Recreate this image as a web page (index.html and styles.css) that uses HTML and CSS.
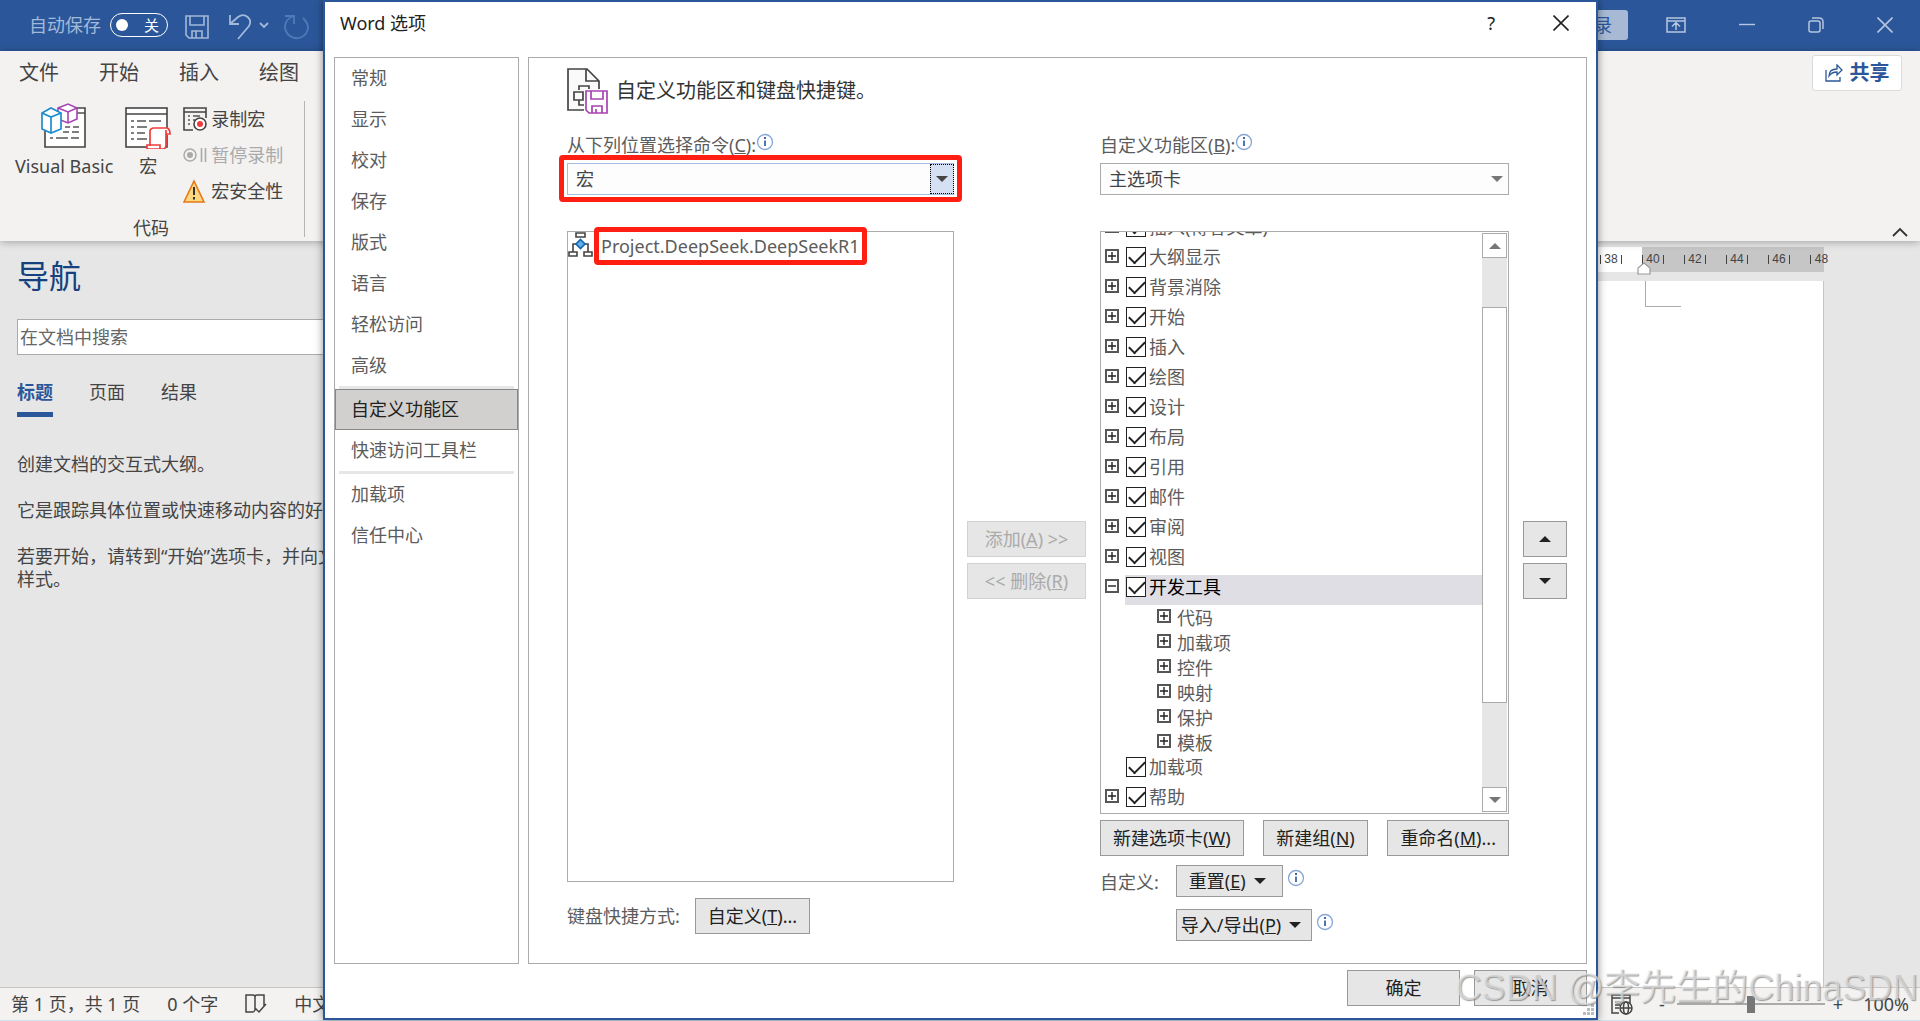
FILE: index.html
```html
<!DOCTYPE html>
<html lang="zh-CN">
<head>
    <meta charset="UTF-8">
    <meta name="viewport" content="width=device-width, initial-scale=1.0">
    <title>Word 选项</title>
    <link rel="stylesheet" href="styles.css">
</head>
<body>
    <svg class="symbols" aria-hidden="true">
        <symbol id="plus" viewBox="0 0 14 14">
            <rect x="1" y="1" width="12" height="12" fill="#fff" stroke="#555" stroke-width="2"/>
            <path d="M3 7h8M7 3v8" stroke="#222" stroke-width="1.4"/>
        </symbol>
        <symbol id="minus" viewBox="0 0 14 14">
            <rect x="1" y="1" width="12" height="12" fill="#fff" stroke="#555" stroke-width="2"/>
            <path d="M3 7h8" stroke="#222" stroke-width="1.4"/>
        </symbol>
        <symbol id="info" viewBox="0 0 18 18">
            <circle cx="9" cy="9" r="7.5" fill="#fff" stroke="#86a6d4" stroke-width="1.3"/>
            <path d="M9 7.500V13" fill="none" stroke="#3f66a3" stroke-width="1.8"/>
            <rect x="8" y="4" width="2" height="2" fill="#3f66a3"/>
        </symbol>
        <symbol id="up" viewBox="0 0 12 6"><path d="M0 6l6-6 6 6z" fill="currentColor"/></symbol>
        <symbol id="down" viewBox="0 0 12 6"><path d="M0 0l6 6 6-6z" fill="currentColor"/></symbol>
        <symbol id="close" viewBox="0 0 16 16"><path d="M.5.5l15 15M15.500.5l-15 15" stroke="currentColor" stroke-width="1.6"/></symbol>
    </svg>

    <div class="app">
        <!-- title bar -->
        <header class="titlebar">
            <div class="quick">
                <span class="autosave">自动保存</span>
                <button class="toggle"><i></i>关</button>
                <button class="tool" aria-label="保存">
                    <svg width="24" height="24" viewBox="0 0 24 24" fill="none" stroke="#a3b9d9" stroke-width="1.6"><path d="M1 1h22v22H4l-3-3zM5 1v9h14V1M7 23v-7h10v7M11 16v7"/></svg>
                </button>
                <button class="tool" aria-label="撤消">
                    <svg width="40" height="26" viewBox="0 0 40 26" fill="none" stroke="#a3b9d9" stroke-width="1.8"><path d="M1 1v9h9M1 10l8-7c7-5 15 2 11 9L9 25"/><path d="M31 9l4 4 4-4"/></svg>
                </button>
                <button class="tool" aria-label="恢复">
                    <svg width="25" height="26" viewBox="0 0 25 26" fill="none" stroke="#5079b7" stroke-width="1.8"><path d="M1 2h9v8M10 2c-10 3-12 14-4 20 7 5 17 1 18-8 0-4-2-7-5-10"/></svg>
                </button>
            </div>
            <div class="window-buttons">
                <button class="login">登录</button>
                <button class="tool" aria-label="功能区显示选项">
                    <svg width="20" height="16" viewBox="0 0 20 16" fill="none" stroke="#b4c6e0" stroke-width="1.5"><path d="M1 1h18v14H1zM1 4h18M10 13V6M6 9.500l4-4 4 4"/></svg>
                </button>
                <button class="tool" aria-label="最小化">
                    <svg width="16" height="16" viewBox="0 0 16 16" stroke="#b4c6e0" stroke-width="1.4"><path d="M0 7.500h16"/></svg>
                </button>
                <button class="tool" aria-label="还原">
                    <svg width="16" height="16" viewBox="0 0 16 16" fill="none" stroke="#b4c6e0" stroke-width="1.5"><rect x="1" y="4" width="11" height="11" rx="2"/><path d="M4 1h7q4 0 4 4v7"/></svg>
                </button>
                <button class="tool" aria-label="关闭"><svg width="16" height="16"><use href="#close"/></svg></button>
            </div>
        </header>

        <!-- ribbon -->
        <section class="ribbon">
            <nav class="tabs">
                <button>文件</button>
                <button>开始</button>
                <button>插入</button>
                <button>绘图</button>
            </nav>
            <div class="group">
                <div class="group-items">
                    <button class="big">
                        <svg width="46" height="46" viewBox="0 0 46 46" fill="none">
                            <path d="M4 28v16h40V5H20" fill="#fff" stroke="#444" stroke-width="1.6"/>
                            <path d="M36 10h8" stroke="#444" stroke-width="1.4"/>
                            <path d="M24 24h5M32 24h6M22 29h6M31 29h7M9 35h3M15 35h12M30 35h8" stroke="#555" stroke-width="1.4"/>
                            <path d="M17 5l10-4 9 4v11l-9 4-10-4z" fill="#fff" stroke="#a743b2" stroke-width="1.6"/>
                            <path d="M17 5l10 4 9-4M27 9v11" stroke="#a743b2" stroke-width="1.6"/>
                            <path d="M1 10l9-5 10 5v16l-10 4-9-4z" fill="#fff" stroke="#1e8bcd" stroke-width="1.7"/>
                            <path d="M1 10l9 4 10-4M10 14v16" stroke="#1e8bcd" stroke-width="1.7"/>
                        </svg>
                        <span>Visual Basic</span>
                    </button>
                    <button class="big">
                        <svg width="46" height="46" viewBox="0 0 46 46" fill="none">
                            <rect x="1" y="5" width="41" height="39" fill="#fff" stroke="#444" stroke-width="1.6"/>
                            <path d="M1 11h41" stroke="#444" stroke-width="1.4"/>
                            <path d="M6 18h3M12 18h9M24 18h12M6 24h3M12 24h10M6 30h3M12 30h8M6 36h3M12 36h10" stroke="#555" stroke-width="1.4"/>
                            <path d="M27 25h15q3 0 3 3v4h-4v12q0 4-4 4H22v-5h3V28q0-3 3-3z" fill="#fff"/>
                            <path d="M25 43V28q0-2 3-3h14q3 1 3 6h-4v11q0 4-3 4H22v-4h13v4M41 31v-4" stroke="#f03c3c" stroke-width="1.7"/>
                        </svg>
                        <span>宏</span>
                    </button>
                    <div class="small-items">
                        <button class="small">
                            <svg width="24" height="24" viewBox="0 0 24 24" fill="none"><path d="M10 23H1V1h22v10M1 5h22" stroke="#444" stroke-width="1.6"/><path d="M5 9h2M10 9h7M5 13h2M5 17h2M10 13h2" stroke="#555" stroke-width="1.4"/><circle cx="17" cy="17" r="6" fill="#fff" stroke="#444" stroke-width="1.6"/><circle cx="17" cy="17" r="3" fill="#f23b3b"/></svg>
                            录制宏
                        </button>
                        <button class="small" disabled>
                            <svg width="24" height="24" viewBox="0 0 24 24" fill="none"><circle cx="7" cy="12" r="6" stroke="#aaa" stroke-width="1.5"/><circle cx="7" cy="12" r="3" fill="#aaa"/><path d="M18.500 5v14M22.500 5v14" stroke="#aaa" stroke-width="1.6"/></svg>
                            暂停录制
                        </button>
                        <button class="small">
                            <svg width="24" height="24" viewBox="0 0 24 24"><path d="M11 2l10 21H1z" fill="#fbd87f" stroke="#e67817" stroke-width="1.6"/><path d="M11 8v8M11 18v2.500" stroke="#333" stroke-width="2"/></svg>
                            宏安全性
                        </button>
                    </div>
                </div>
                <div class="group-name">代码</div>
            </div>
            <div class="ribbon-side">
                <button class="share">
                    <svg width="18" height="18" viewBox="0 0 18 18" fill="none" stroke="#2b579a" stroke-width="1.3"><path d="M1 6v11h14v-4M4 12c0-5 3-7 8-7V1l5 5-5 5V8c-4 0-6 1-8 4z"/></svg>
                    共享
                </button>
                <button class="tool" aria-label="折叠功能区">
                    <svg width="16" height="10" viewBox="0 0 16 10" fill="none" stroke="#333" stroke-width="1.8"><path d="M1 9l7-7 7 7"/></svg>
                </button>
            </div>
        </section>

        <main class="workspace">
            <aside class="nav-pane">
                <h2>导航</h2>
                <input class="search" type="text" placeholder="在文档中搜索" aria-label="在文档中搜索">
                <div class="nav-tabs">
                    <button class="active">标题</button>
                    <button>页面</button>
                    <button>结果</button>
                </div>
                <p>创建文档的交互式大纲。</p>
                <p>它是跟踪具体位置或快速移动内容的好方法。</p>
                <p>若要开始，请转到“开始”选项卡，并向文档<br>样式。</p>
            </aside>
            <div class="document">
                <div class="ruler">
                    <div class="ruler-text"><span>38</span></div>
                    <div class="ruler-margin">
                        <span>40</span><span>42</span><span>44</span><span>46</span><span class="last">48</span>
                        <svg class="indent" width="14" height="13" viewBox="0 0 14 13"><path d="M1 12V6l6-5 6 5v6z" fill="#fff" stroke="#999" stroke-width="1.2"/></svg>
                    </div>
                </div>
                <div class="page"><div class="crop-mark"></div></div>
            </div>
        </main>

        <footer class="status">
            <div class="status-left">
                <span>第 1 页，共 1 页</span>
                <span>0 个字</span>
                <svg width="22" height="20" viewBox="0 0 22 20" fill="none" stroke="#444" stroke-width="1.5"><path d="M10 2v14q-1 2-2 2H1V1h7q2 0 2 2 0-2 2-2h7v11M10 14l4 4 7-8M19 1v8"/></svg>
                <span>中文(中国)</span>
            </div>
            <div class="status-right">
                <svg width="22" height="21" viewBox="0 0 22 21" fill="none" stroke="#444" stroke-width="1.5"><path d="M8 19H1V1h18v8M1 4h18M4 8h8M4 11h5M4 14h4"/><circle cx="15" cy="14" r="6" fill="#f3f2f1"/><ellipse cx="15" cy="14" rx="2.500" ry="6"/><path d="M9 14h12"/></svg>
                <span>-</span>
                <input class="zoom" type="range" min="0" max="100" value="50" aria-label="缩放">
                <span>+</span>
                <span class="percent">100%</span>
            </div>
        </footer>
    </div>

    <!-- options dialog -->
    <div class="dialog" role="dialog" aria-label="Word 选项">
        <div class="dialog-title">
            <h1>Word 选项</h1>
            <button class="tool help">?</button>
            <button class="tool" aria-label="关闭"><svg width="16" height="16"><use href="#close"/></svg></button>
        </div>
        <div class="dialog-body">
            <nav class="categories">
                <button>常规</button>
                <button>显示</button>
                <button>校对</button>
                <button>保存</button>
                <button>版式</button>
                <button>语言</button>
                <button>轻松访问</button>
                <button>高级</button>
                <hr>
                <button class="selected">自定义功能区</button>
                <button>快速访问工具栏</button>
                <hr>
                <button>加载项</button>
                <button>信任中心</button>
            </nav>
            <section class="panel">
                <div class="panel-heading">
                    <svg width="42" height="46" viewBox="0 0 42 46" fill="none">
                        <path d="M1 1h19l12 12v29H1z" fill="#fafafa"/>
                        <path d="M17 42H1V1h19l12 12v10M19 1v12h13" stroke="#444" stroke-width="1.7"/>
                        <path d="M12 22v-4h10v5M7 24h9v8H7zM12 32v5h6" stroke="#444" stroke-width="1.7"/>
                        <path d="M17 21h25v25H17z" fill="#fff"/>
                        <path d="M19 23h21v22H22l-3-3zM24 23v8h12v-8M25 45v-7h10v7M29 41v4" stroke="#a743b2" stroke-width="1.7"/>
                    </svg>
                    <h2>自定义功能区和键盘快捷键。</h2>
                </div>
                <div class="columns">
                    <div class="commands">
                        <div class="field-label">
                            <label for="source">从下列位置选择命令(<u>C</u>):</label>
                            <svg class="info" width="18" height="18"><use href="#info"/></svg>
                        </div>
                        <div class="combo focused">
                            <select id="source"><option>宏</option></select>
                            <span class="combo-arrow"><svg width="12" height="6"><use href="#down"/></svg></span>
                            <span class="mark"></span>
                        </div>
                        <ul class="command-list" role="listbox" aria-label="命令">
                            <li role="option">
                                <svg width="25" height="25" viewBox="0 0 25 25" fill="none" stroke="#444" stroke-width="1.6"><path d="M8 1h9v4H8zM1 20h8v4H1zM16 20h8v4h-8zM5 20v-8h4M16 12h4v8"/><path d="M12.500 7.500l4.500 4.500-4.500 4.500L8 12z" fill="#5fb0ea" stroke="#1565ad"/></svg>
                                <span class="command">Project.DeepSeek.DeepSeekR1<span class="mark"></span></span>
                            </li>
                        </ul>
                        <div class="keyboard">
                            <span>键盘快捷方式:</span>
                            <button class="btn">自定义(<u>T</u>)...</button>
                        </div>
                    </div>

                    <div class="transfer">
                        <button class="btn" disabled>添加(<u>A</u>) &gt;&gt;</button>
                        <button class="btn" disabled>&lt;&lt; 删除(<u>R</u>)</button>
                    </div>

                    <div class="ribbon-tabs">
                        <div class="field-label">
                            <label for="target">自定义功能区(<u>B</u>):</label>
                            <svg class="info" width="18" height="18"><use href="#info"/></svg>
                        </div>
                        <div class="combo">
                            <select id="target"><option>主选项卡</option></select>
                            <span class="combo-arrow"><svg width="12" height="6"><use href="#down"/></svg></span>
                        </div>
                        <div class="tree">
                            <ul>
                                <li><svg><use href="#plus"/></svg><label><input type="checkbox" checked>插入(博客文章)</label></li>
                                <li><svg><use href="#plus"/></svg><label><input type="checkbox" checked>大纲显示</label></li>
                                <li><svg><use href="#plus"/></svg><label><input type="checkbox" checked>背景消除</label></li>
                                <li><svg><use href="#plus"/></svg><label><input type="checkbox" checked>开始</label></li>
                                <li><svg><use href="#plus"/></svg><label><input type="checkbox" checked>插入</label></li>
                                <li><svg><use href="#plus"/></svg><label><input type="checkbox" checked>绘图</label></li>
                                <li><svg><use href="#plus"/></svg><label><input type="checkbox" checked>设计</label></li>
                                <li><svg><use href="#plus"/></svg><label><input type="checkbox" checked>布局</label></li>
                                <li><svg><use href="#plus"/></svg><label><input type="checkbox" checked>引用</label></li>
                                <li><svg><use href="#plus"/></svg><label><input type="checkbox" checked>邮件</label></li>
                                <li><svg><use href="#plus"/></svg><label><input type="checkbox" checked>审阅</label></li>
                                <li><svg><use href="#plus"/></svg><label><input type="checkbox" checked>视图</label></li>
                                <li class="current"><svg><use href="#minus"/></svg><label><input type="checkbox" checked>开发工具</label></li>
                                <li class="child"><svg><use href="#plus"/></svg>代码</li>
                                <li class="child"><svg><use href="#plus"/></svg>加载项</li>
                                <li class="child"><svg><use href="#plus"/></svg>控件</li>
                                <li class="child"><svg><use href="#plus"/></svg>映射</li>
                                <li class="child"><svg><use href="#plus"/></svg>保护</li>
                                <li class="child"><svg><use href="#plus"/></svg>模板</li>
                                <li><svg></svg><label><input type="checkbox" checked>加载项</label></li>
                                <li><svg><use href="#plus"/></svg><label><input type="checkbox" checked>帮助</label></li>
                            </ul>
                            <div class="scrollbar">
                                <button aria-label="向上滚动"><svg width="12" height="6"><use href="#up"/></svg></button>
                                <div class="track"><div class="thumb"></div></div>
                                <button aria-label="向下滚动"><svg width="12" height="6"><use href="#down"/></svg></button>
                            </div>
                        </div>
                        <div class="tab-actions">
                            <button class="btn">新建选项卡(<u>W</u>)</button>
                            <button class="btn">新建组(<u>N</u>)</button>
                            <button class="btn">重命名(<u>M</u>)...</button>
                        </div>
                        <div class="customize">
                            <span>自定义:</span>
                            <div class="customize-buttons">
                                <div>
                                    <button class="btn menu"><span>重置(<u>E</u>)</span><svg width="12" height="6"><use href="#down"/></svg></button>
                                    <svg class="info" width="18" height="18"><use href="#info"/></svg>
                                </div>
                                <div>
                                    <button class="btn menu tight"><span>导入/导出(<u>P</u>)</span><svg width="12" height="6"><use href="#down"/></svg></button>
                                    <svg class="info" width="18" height="18"><use href="#info"/></svg>
                                </div>
                            </div>
                        </div>
                    </div>

                    <div class="order">
                        <button class="btn" aria-label="上移"><svg width="12" height="6"><use href="#up"/></svg></button>
                        <button class="btn" aria-label="下移"><svg width="12" height="6"><use href="#down"/></svg></button>
                    </div>
                </div>
            </section>
        </div>
        <div class="dialog-footer">
            <button class="btn">确定</button>
            <button class="btn">取消</button>
            <svg class="grip" width="12" height="12" viewBox="0 0 12 12" fill="#bbb"><path d="M8 0h3v3H8zM8 4h3v3H8zM8 8h3v3H8zM4 4h3v3H4zM4 8h3v3H4zM0 8h3v3H0z"/></svg>
        </div>
    </div>

    <div class="watermark">CSDN @李先生的ChinaSDN</div>
</body>
</html>
```
FILE: styles.css
```css
* {
    box-sizing: border-box;
}
body {
    margin: 0;
    height: 100vh;
    overflow: hidden;
    position: relative;
    font-family: "Noto Sans", "Noto Sans CJK SC", sans-serif;
    font-size: 18px;
    line-height: 24px;
    color: #444;
    background: #cfe3ee;
}
button, input, select {
    font: inherit;
    color: inherit;
}
button {
    padding: 0;
    border: none;
    background: none;
    white-space: nowrap;
}
h1, h2, p, ul {
    margin: 0;
    padding: 0;
    font-weight: inherit;
}
ul {
    list-style: none;
}
svg {
    display: block;
    flex: none;
}
.symbols {
    position: absolute;
    width: 0;
    height: 0;
}

/* application window */
.app {
    display: flex;
    flex-direction: column;
    height: calc(100vh - 1px);
}
.titlebar {
    display: flex;
    justify-content: space-between;
    height: 51px;
    background: #2b579a;
    color: #a3b9d9;
}
.quick {
    display: flex;
    align-items: center;
    height: 49px;
    padding-left: 29px;
}
.toggle {
    display: flex;
    align-items: center;
    justify-content: space-between;
    width: 58px;
    height: 24px;
    margin: 0 17px 0 9px;
    padding: 0 8px 0 5px;
    border: 1px solid #fff;
    border-radius: 12px;
    color: #fff;
    font-size: 15px;
}
.toggle i {
    width: 12px;
    height: 12px;
    border-radius: 50%;
    background: #fff;
}
.quick .tool {
    margin: 4px 20px 0 0;
}
.quick .tool + .tool + .tool {
    margin-left: -5px;
}
.window-buttons {
    display: flex;
    align-items: center;
    gap: 53px;
    height: 49px;
    padding-right: 27px;
    color: #b4c6e0;
}
.login {
    width: 76px;
    height: 30px;
    padding-right: 16px;
    margin-right: -15px;
    border-radius: 3px;
    background: #a7b9d4;
    color: #2b579a;
    text-align: right;
}
.ribbon {
    position: relative;
    z-index: 1;
    display: grid;
    grid-template-columns: 1fr auto;
    grid-template-rows: 44px 1fr;
    height: 190px;
    background: #f3f2f1;
    box-shadow: 0 1px 8px rgba(0, 0, 0, .3);
}
.tabs {
    display: flex;
    gap: 40px;
    padding-left: 19px;
    font-size: 20px;
}
.group {
    grid-row: 2;
    grid-column: 1;
    justify-self: start;
    width: 305px;
    height: 136px;
    margin-top: 6px;
    padding-left: 15px;
    border-right: 1px solid #b5b5b5;
}
.group-items {
    display: flex;
    height: 111px;
}
.big {
    display: flex;
    flex-direction: column;
    align-items: center;
    gap: 5px;
    height: 80px;
    margin: 2px 12px 0 0;
}
.small-items {
    display: flex;
    flex-direction: column;
    gap: 12px;
    padding-top: 6px;
}
.small {
    display: flex;
    align-items: center;
    gap: 4px;
}
.small:disabled {
    color: #aaa;
}
.group-name {
    padding-left: 118px;
    line-height: 32px;
}
.ribbon-side {
    grid-row: 1 / 3;
    grid-column: 2;
    display: flex;
    flex-direction: column;
    justify-content: space-between;
    align-items: flex-end;
    padding: 4px 18px 4px 0;
}
.ribbon-side .tool {
    margin-right: -6px;
}
.share {
    display: flex;
    align-items: center;
    justify-content: center;
    gap: 7px;
    width: 90px;
    height: 36px;
    border: 1px solid #dcdbda;
    border-radius: 3px;
    background: #fff;
    color: #2b579a;
    font-size: 20px;
    font-weight: 700;
}
.workspace {
    flex: 1;
    display: flex;
    min-height: 0;
    background: #e6e6e6;
}
.nav-pane {
    width: 370px;
    padding: 15px 0 0 17px;
    white-space: nowrap;
}
.nav-pane h2 {
    height: 63px;
    font-size: 32px;
    line-height: 40px;
    color: #15417e;
}
.search {
    display: block;
    width: 100%;
    height: 36px;
    padding: 0 2px;
    border: 1px solid #ababab;
    background: #fff;
}
.search::placeholder {
    color: #666;
    opacity: 1;
}
.nav-tabs {
    display: flex;
    gap: 36px;
    margin: 24px 0 36px;
}
.nav-tabs button {
    height: 38px;
    padding-bottom: 8px;
    border-bottom: 5px solid transparent;
}
.nav-tabs .active {
    border-color: #2b579a;
    color: #2b579a;
    font-weight: 700;
}
.nav-pane p {
    margin-bottom: 23px;
    line-height: 23px;
}
.document {
    flex: 1;
    display: flex;
    flex-direction: column;
    margin-right: 96px;
    padding-top: 6px;
}
.ruler {
    display: flex;
    height: 25px;
    margin-bottom: 9px;
    font: 400 12px/9px "Liberation Sans", Arial, sans-serif;
}
.ruler-text {
    flex: 1;
    display: flex;
    justify-content: flex-end;
    align-items: center;
    background: #fff;
}
.ruler-margin {
    position: relative;
    display: flex;
    align-items: center;
    width: 182px;
    background: #c6c6c6;
}
.ruler span {
    flex: none;
    width: 22px;
    margin-right: 20px;
    border: solid #444;
    border-width: 0 1px;
    text-align: center;
}
.ruler .last {
    border-right: none;
    margin-right: -20px;
}
.indent {
    position: absolute;
    left: -5px;
    bottom: -3px;
}
.page {
    flex: 1;
    background: #fff;
    border-right: 1px solid #c6c6c6;
}
.crop-mark {
    width: 36px;
    height: 26px;
    margin-left: auto;
    margin-right: 142px;
    border: solid #ababab;
    border-width: 0 0 1px 1px;
}
.status {
    display: flex;
    justify-content: space-between;
    height: 33px;
    border-top: 1px solid #c6c6c6;
    background: #f3f2f1;
}
.status-left, .status-right {
    display: flex;
    align-items: center;
}
.status-left {
    gap: 27px;
    padding-left: 11px;
}
.status-right {
    gap: 8px;
    padding-right: 11px;
}
.status-right svg {
    margin-right: 18px;
}
.zoom {
    appearance: none;
    width: 148px;
    height: 18px;
    margin: 0 0 0 4px;
    background: linear-gradient(#aaa, #aaa) center / 100% 2px no-repeat;
}
.zoom::-webkit-slider-thumb {
    appearance: none;
    width: 8px;
    height: 17px;
    background: #777;
}
.percent {
    margin-left: 12px;
}

/* options dialog */
.dialog {
    position: absolute;
    top: 0;
    right: 322px;
    bottom: 1px;
    left: 323px;
    z-index: 2;
    display: flex;
    flex-direction: column;
    border: 2px solid #2b579a;
    background: #fff;
    box-shadow: 0 0 8px rgba(0, 0, 0, .45);
    color: #5c5c5c;
}
.dialog-title {
    display: flex;
    align-items: center;
    height: 55px;
    padding: 0 27px 14px 15px;
    color: #222;
}
.dialog-title h1 {
    flex: 1;
    font-size: 18px;
}
.dialog-title .help {
    margin-right: 58px;
}
.dialog-body {
    flex: 1;
    display: flex;
    gap: 9px;
    min-height: 0;
    padding: 0 9px;
}
.categories {
    display: flex;
    flex-direction: column;
    width: 185px;
    border: 1px solid #ababab;
}
.categories button {
    height: 41px;
    padding: 0 0 1px 16px;
    text-align: left;
}
.categories .selected {
    padding-left: 15px;
    border: 1px solid #888;
    background: #d2d0ce;
    color: #222;
}
.categories hr {
    width: calc(100% - 8px);
    height: 3px;
    margin: 0 auto;
    border: none;
    background: #e6e6e6;
}
.panel {
    flex: 1;
    display: flex;
    flex-direction: column;
    padding: 10px 19px 22px 38px;
    border: 1px solid #ababab;
}
.panel-heading {
    display: flex;
    align-items: center;
    gap: 7px;
    height: 65px;
    padding-bottom: 19px;
}
.panel-heading h2 {
    font-size: 20px;
    color: #333;
}
.columns {
    flex: 1;
    display: flex;
    min-height: 0;
}
.commands, .ribbon-tabs {
    display: flex;
    flex-direction: column;
    min-width: 0;
}
.commands {
    flex: 387 1 0;
    padding-bottom: 7px;
}
.ribbon-tabs {
    flex: 409 1 0;
}
.field-label {
    display: flex;
    height: 30px;
}
.combo {
    position: relative;
    height: 32px;
    margin-bottom: 36px;
}
.combo select {
    appearance: none;
    width: 100%;
    height: 32px;
    padding: 0 30px 0 8px;
    border: 1px solid #ababab;
    border-radius: 0;
    background: #fdfdfd;
    color: #444;
}
.combo-arrow {
    position: absolute;
    top: 1px;
    right: 0;
    bottom: 1px;
    width: 24px;
    display: flex;
    align-items: center;
    justify-content: center;
    color: #777;
    pointer-events: none;
}
.focused select {
    border-color: #a3bde3;
}
.focused .combo-arrow {
    border: 1px dotted #000;
    background: #d5e1f2;
    color: #444;
}
.mark {
    position: absolute;
    inset: -8px -8px -7px;
    border: 5px solid #ff1e12;
    border-radius: 4px;
    pointer-events: none;
}
.command-list {
    flex: 1;
    border: 1px solid #ababab;
}
.command-list li {
    display: flex;
    gap: 8px;
}
.command {
    position: relative;
    line-height: 28px;
}
.command .mark {
    inset: -5px -7px;
}
.keyboard {
    display: flex;
    align-items: center;
    gap: 15px;
    margin-top: 16px;
}
.btn {
    height: 36px;
    padding: 0 12px;
    border: 1px solid #999;
    background: #e6e6e6;
    color: #222;
}
.btn svg {
    margin: 0 auto;
}
.btn:disabled {
    border-color: #d2d2d2;
    color: #aaa;
}
.transfer, .order {
    display: flex;
    flex-direction: column;
    justify-content: center;
    gap: 6px;
    padding-top: 45px;
}
.transfer {
    width: 119px;
    margin: 0 14px 0 13px;
}
.transfer .btn {
    padding: 0;
}
.order {
    width: 44px;
    margin-left: 14px;
}
.tree {
    flex: 1;
    display: flex;
    min-height: 0;
    padding: 1px;
    border: 1px solid #ababab;
    overflow: hidden;
}
.tree ul {
    flex: 1;
    margin-top: -18px;
}
.tree li {
    display: flex;
    height: 30px;
    padding-left: 3px;
}
.tree li svg {
    width: 14px;
    height: 14px;
    margin: 4px 6px 0 0;
}
.tree label {
    flex: 1;
    display: flex;
    align-items: center;
    gap: 3px;
    height: 30px;
    padding: 0 0 7px 1px;
}
.tree .current label {
    background: #dfdee4;
    color: #000;
}
.tree .child {
    height: 25px;
    padding-left: 55px;
    line-height: 26px;
}
.tree input {
    appearance: none;
    position: relative;
    width: 20px;
    height: 20px;
    margin: 0;
    border: 1px solid #222;
    background: #fff;
}
.tree input:checked::after {
    content: "";
    position: absolute;
    left: 2px;
    top: 3px;
    width: 14px;
    height: 7px;
    border: solid #222;
    border-width: 0 0 2px 2px;
    transform: rotate(-45deg);
}
.scrollbar {
    display: flex;
    flex-direction: column;
    width: 25px;
    background: #e6e6e6;
    color: #777;
}
.scrollbar button {
    display: flex;
    align-items: center;
    justify-content: center;
    height: 25px;
    border: 1px solid #ababab;
    background: #fff;
}
.track {
    flex: 1;
    display: flex;
    flex-direction: column;
    padding: 49px 0 84px;
}
.thumb {
    flex: 1;
    border: 1px solid #ababab;
    background: #fff;
}
.tab-actions {
    display: flex;
    justify-content: space-between;
    margin: 6px 0 9px;
}
.customize {
    display: flex;
    gap: 17px;
    line-height: 34px;
}
.customize-buttons {
    display: flex;
    flex-direction: column;
    gap: 12px;
}
.customize-buttons div {
    display: flex;
    gap: 4px;
}
.customize .info {
    margin-top: 4px;
}
.menu {
    display: flex;
    align-items: center;
    gap: 8px;
    height: 32px;
    padding: 0 16px 0 12px;
}
.tight {
    padding: 0 10px 0 4px;
}
.dialog-footer {
    position: relative;
    display: flex;
    justify-content: flex-end;
    gap: 14px;
    padding: 6px 9px 12px;
}
.dialog-footer .btn {
    width: 113px;
}
.grip {
    position: absolute;
    right: 1px;
    bottom: 2px;
}

.watermark {
    position: absolute;
    right: 2px;
    bottom: 9px;
    z-index: 3;
    font: 400 36px/48px "Liberation Sans", "Noto Sans CJK SC", sans-serif;
    color: rgba(240, 240, 240, .6);
    text-shadow: 1px 1px 1px rgba(120, 120, 120, .7);
    pointer-events: none;
}
```
